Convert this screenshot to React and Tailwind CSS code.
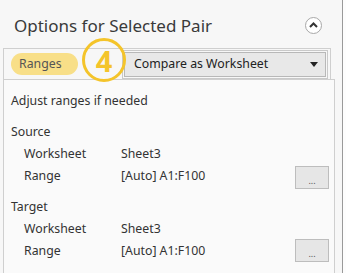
export default function App() {
  const font = { fontFamily: '"Noto Sans", "Open Sans", sans-serif' };
  return (
    <div className="relative w-[346px] h-[273px] overflow-hidden bg-[#f7f7f7] text-[#333]" style={font}>
      <div className="absolute top-0 bottom-0 left-[342px] w-[1px] bg-[#9a9a9a]" />
      <div className="absolute top-0 bottom-0 left-[343px] w-[3px] bg-[#fdfdfd]" />
      <div className="flex items-center h-[48px] pl-[14px] pr-[20px] pt-[2px]">
        <div className="text-[17px] leading-none text-[#3a3a3a] flex-1">Options for Selected Pair</div>
        <div className="w-[17px] h-[17px] rounded-full border border-[#a8a8a8] bg-white flex items-center justify-center mr-[4px]">
          <svg width="9" height="6" viewBox="0 0 9 6"><path d="M1 5 L4.5 1.5 L8 5" fill="none" stroke="#333" strokeWidth="2" /></svg>
        </div>
      </div>
      <div className="ml-[3px] w-[328px] h-[31px] border-t border-l border-r border-[#cfcfcf] flex items-center">
        <div className="ml-[7px] w-[67px] h-[22px] rounded-full bg-[#f8df88] flex items-center pl-[8px] text-[12.3px] text-[#555]">Ranges</div>
        <div className="relative w-[44px] h-full">
          <div className="absolute left-[4px] top-[-11px] w-[44px] h-[44px] rounded-full border-[3px] border-[#f4c42a] flex items-center justify-center">
            <span className="text-[29px] font-bold text-[#f4c42a] leading-none">4</span>
          </div>
        </div>
        <div className="ml-[0px] w-[206px] h-[29px] border border-[#c9c9c9] p-[1px]">
          <div className="h-full border border-[#b8b8b8] bg-[#e8e8e8] flex items-center pl-[9px] pr-[7px] text-[12.3px] text-[#222]">
            <span className="flex-1">Compare as Worksheet</span>
            <svg width="8" height="5" viewBox="0 0 8 5"><path d="M0 0 L8 0 L4 5 Z" fill="#222" /></svg>
          </div>
        </div>
      </div>
      <div className="ml-[3px] w-[332px] h-[200px] border-t border-l border-r border-[#cfcfcf] bg-[#fafafa] text-[12.3px]">
        <div className="h-[22px] mt-[10px] flex items-center pl-[7px]">Adjust ranges if needed</div>
        <div className="h-[22px] mt-[9px] flex items-center pl-[7px]">Source</div>
        <div className="h-[22px] flex items-center pl-[20px]">
          <span className="w-[97px]">Worksheet</span><span>Sheet3</span>
        </div>
        <div className="h-[22px] flex items-center pl-[20px]">
          <span className="w-[97px]">Range</span><span className="flex-1">[Auto] A1:F100</span>
          <div className="w-[34px] h-[23px] mr-[5px] mt-[2px] border border-[#bdbdbd] bg-[#e6e6e6] flex items-end justify-center pb-[3px] text-[9px] leading-none text-[#555]">...</div>
        </div>
        <div className="h-[22px] mt-[9px] flex items-center pl-[7px]">Target</div>
        <div className="h-[22px] flex items-center pl-[20px]">
          <span className="w-[97px]">Worksheet</span><span>Sheet3</span>
        </div>
        <div className="h-[22px] flex items-center pl-[20px]">
          <span className="w-[97px]">Range</span><span className="flex-1">[Auto] A1:F100</span>
          <div className="w-[34px] h-[23px] mr-[5px] mt-[-2px] border border-[#bdbdbd] bg-[#e6e6e6] flex items-end justify-center pb-[3px] text-[9px] leading-none text-[#555]">...</div>
        </div>
      </div>
    </div>
  );
}
